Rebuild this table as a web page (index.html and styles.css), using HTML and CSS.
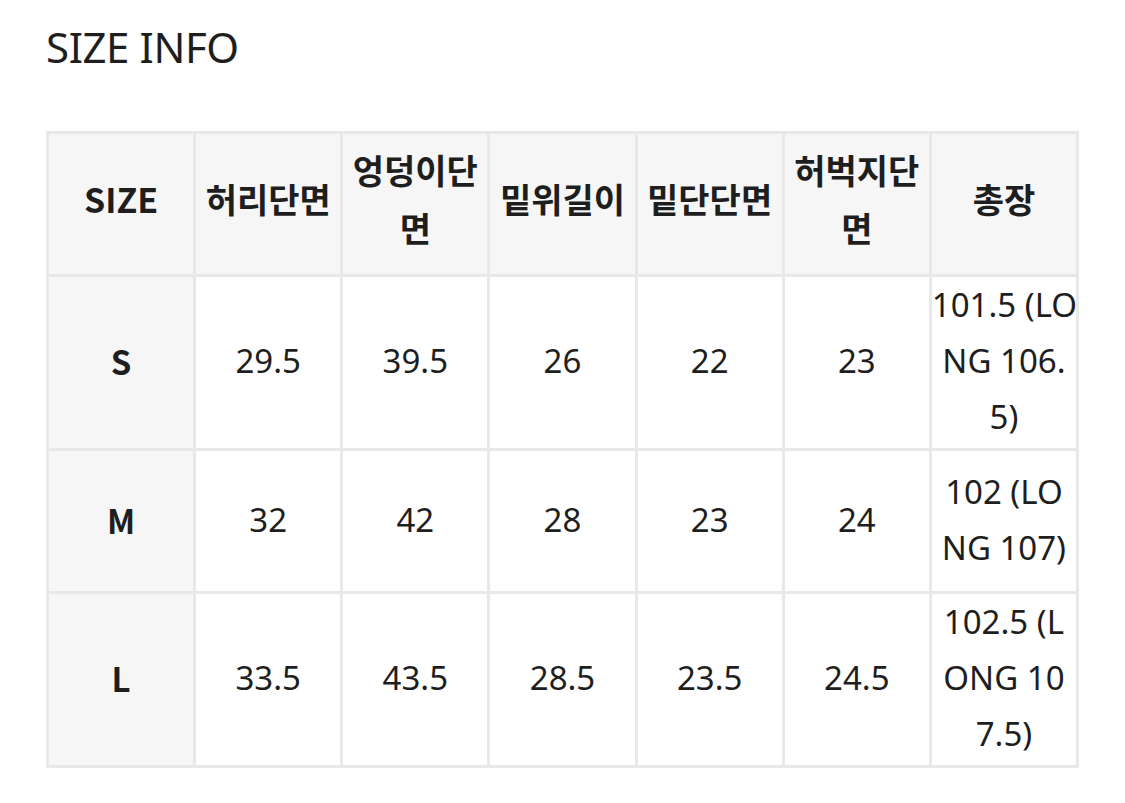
FILE: index.html
```html
<!DOCTYPE html>
<html lang="ko">
<head>
<meta charset="utf-8">
<title>SIZE INFO</title>
<link rel="stylesheet" href="styles.css">
</head>
<body>
<div class="page">
  <h2 class="title">SIZE INFO</h2>
  <table class="size-table">
    <colgroup>
      <col><col><col><col><col><col><col>
    </colgroup>
    <thead>
      <tr>
        <th>SIZE</th>
        <th>허리단면</th>
        <th>엉덩이단<br>면</th>
        <th>밑위길이</th>
        <th>밑단단면</th>
        <th>허벅지단<br>면</th>
        <th>총장</th>
      </tr>
    </thead>
    <tbody>
      <tr class="tall">
        <th class="size">S</th>
        <td>29.5</td>
        <td>39.5</td>
        <td>26</td>
        <td>22</td>
        <td>23</td>
        <td>101.5 (LO<br>NG 106.<br>5)</td>
      </tr>
      <tr>
        <th class="size">M</th>
        <td>32</td>
        <td>42</td>
        <td>28</td>
        <td>23</td>
        <td>24</td>
        <td>102 (LO<br>NG 107)</td>
      </tr>
      <tr class="tall">
        <th class="size">L</th>
        <td>33.5</td>
        <td>43.5</td>
        <td>28.5</td>
        <td>23.5</td>
        <td>24.5</td>
        <td>102.5 (L<br>ONG 10<br>7.5)</td>
      </tr>
    </tbody>
  </table>
</div>
</body>
</html>
```

FILE: styles.css
```css
html, body {
  margin: 0;
  padding: 0;
  background: #ffffff;
}

body {
  font-family: "Noto Sans", "Noto Sans CJK KR", sans-serif;
  color: #1e1e1e;
}

.page {
  padding: 18px 46px 0 46px;
}

.title {
  margin: 0;
  font-family: "Noto Sans", "Noto Sans CJK KR", sans-serif;
  font-weight: 400;
  font-size: 42px;
  line-height: 58px;
  color: #1e1e1e;
  letter-spacing: -0.4px;
}

.size-table {
  margin-top: 55px;
  width: 1033px;
  table-layout: fixed;
  border-collapse: collapse;
  border: 3px solid #e8e8e8;
}

.size-table th,
.size-table td {
  border: 3px solid #e8e8e8;
  text-align: center;
  vertical-align: middle;
  padding: 0 0 3px 0;
  font-size: 33px;
  line-height: 56px;
  white-space: nowrap;
  font-family: "Noto Sans CJK KR", sans-serif;
}

.size-table thead th {
  background: #f6f6f6;
  font-weight: 700;
  font-size: 34px;
  line-height: 58px;
  height: 130px;
  padding: 0 0 10px 0;
}

.size-table tbody th.size {
  background: #f6f6f6;
  font-weight: 700;
  font-size: 33px;
}

.size-table td {
  background: #ffffff;
  font-weight: 400;
  font-family: "Noto Sans", "Noto Sans CJK KR", sans-serif;
}

.size-table tbody tr {
  height: 143px;
}
```
